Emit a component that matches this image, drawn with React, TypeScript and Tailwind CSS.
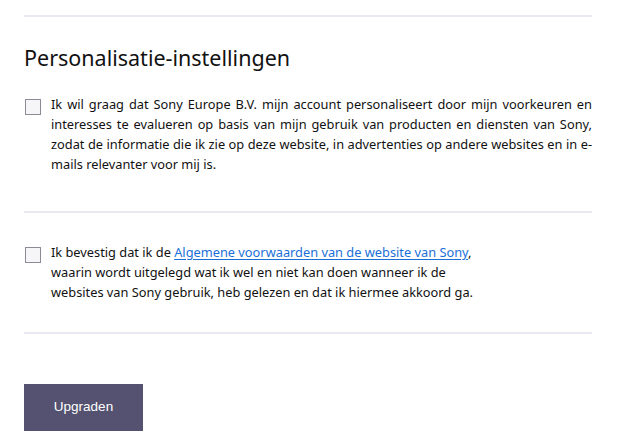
import React from 'react';

const Checkbox = () => (
  <span className="mt-[5px] block h-[16px] w-[16px] shrink-0 border border-[#8b8a97] bg-[#f6f6f9]" />
);

const personalLines = [
  'Ik wil graag dat Sony Europe B.V. mijn account personaliseert door mijn voorkeuren en',
  'interesses te evalueren op basis van mijn gebruik van producten en diensten van Sony,',
  'zodat de informatie die ik zie op deze website, in advertenties op andere websites en in e-',
];

export default function App() {
  return (
    <div className="min-h-[446px] w-[638px] bg-white text-[#111] [font-family:'Noto_Sans',sans-serif]">
      <div className="ml-[24px] w-[568px] pt-[15px]">
        <div className="h-[2px] bg-[#e8e9f1]" />

        <h2 className="mt-[27px] text-[21.5px] leading-[28px] text-[#111]">
          Personalisatie-instellingen
        </h2>

        <div className="mt-[22px] flex gap-[10px] pl-px">
          <Checkbox />
          <div className="w-[541px] text-[12.8px] leading-[20px]">
            {personalLines.map((line) => (
              <span
                key={line}
                className="block whitespace-nowrap text-justify [text-align-last:justify]"
              >
                {line}
              </span>
            ))}
            <span className="block">mails relevanter voor mij is.</span>
          </div>
        </div>

        <div className="mt-[37px] h-[2px] bg-[#e8e9f1]" />

        <div className="mt-[29px] flex gap-[10px] pl-px">
          <Checkbox />
          <div className="text-[12.8px] leading-[20px]">
            <span className="block whitespace-nowrap">
              Ik bevestig dat ik de{' '}
              <a href="#" className="text-[#1a6fd8] underline underline-offset-2">
                Algemene voorwaarden van de website van Sony
              </a>
              ,
            </span>
            <span className="block whitespace-nowrap">
              waarin wordt uitgelegd wat ik wel en niet kan doen wanneer ik de
            </span>
            <span className="block whitespace-nowrap">
              websites van Sony gebruik, heb gelezen en dat ik hiermee akkoord ga.
            </span>
          </div>
        </div>

        <div className="mt-[30px] h-[2px] bg-[#e8e9f1]" />

        <button
          className="mt-[50px] h-[47px] w-[119px] bg-[#545270] text-[13.5px] text-white"
          style={{ fontFamily: '"Liberation Sans", Arial, sans-serif' }}
        >
          Upgraden
        </button>
      </div>
    </div>
  );
}
